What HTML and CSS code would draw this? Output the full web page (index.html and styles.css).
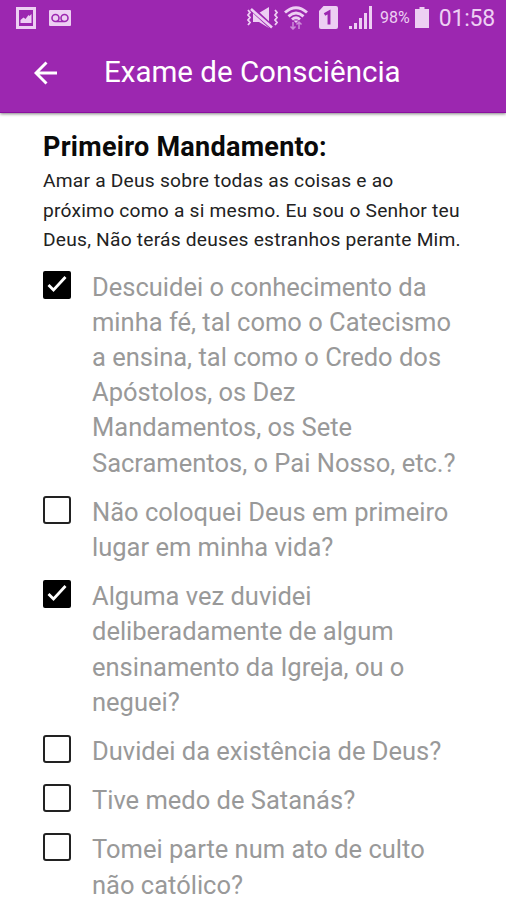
FILE: index.html
```html
<!DOCTYPE html>
<html lang="pt">
<head>
    <meta charset="UTF-8">
    <meta name="viewport" content="width=device-width, initial-scale=1.0">
    <title>Exame de Consciência</title>
    <link rel="stylesheet" href="styles.css">
</head>
<body>
    <header class="app-header">
        <!-- Status bar -->
        <div class="status-bar">
            <svg class="icon-picture" width="20" height="22" viewBox="0 0 20 22">
                <path fill="none" stroke="currentColor" stroke-width="3" d="M1.5 1.5h17v19h-17z"/>
                <path fill="currentColor" d="M4.500 16v-3l3-2.500 2 1.500 3-4 1 1 2-2v9z"/>
            </svg>
            <svg class="icon-voicemail" width="22" height="16" viewBox="0 0 22 16">
                <rect width="22" height="16" rx="1" fill="currentColor"/>
                <path fill="none" stroke="#9c27b0" stroke-width="1.600" d="M6.500 4.500a3.500 3.500 0 1 0 0 7a3.500 3.500 0 1 0 0-7M15.500 4.500a3.500 3.500 0 1 0 0 7a3.500 3.500 0 1 0 0-7M6.500 11.500h9"/>
            </svg>
            <div class="status-right">
                <svg class="icon-mute" width="34" height="22" viewBox="0 0 34 22">
                    <path fill="currentColor" d="M7 6h6l10-6v21l-10-6H7z"/>
                    <path stroke="#9c27b0" stroke-width="5" d="M5 1l20 18.500"/>
                    <path stroke="currentColor" stroke-width="2.600" d="M5 2l21 18.500"/>
                    <path fill="none" stroke="currentColor" stroke-width="1.800" d="M2 3l2 2.500-2 2.500 2 2.500-2 2.500 2 2.500-2 2.500M29 3l2 2.500-2 2.500 2 2.500-2 2.500 2 2.500-2 2.500"/>
                </svg>
                <svg class="icon-wifi" width="24" height="24" viewBox="0 0 24 24">
                    <path fill="none" stroke="currentColor" stroke-width="2.900" d="M1 6.500q11-9.500 22 0M4.500 10.300q7.500-6.500 15 0M8 13.500q4-3.500 8 0"/>
                    <path fill="currentColor" d="M9.500 14.500h5L12 17z"/>
                    <path fill="none" stroke="currentColor" stroke-width="1.500" opacity=".6" d="M9 16v7M6.500 20.500L9 23l2.500-2.500M15 23v-7M12.500 18.500L15 16l2.500 2.500"/>
                </svg>
                <svg class="icon-sim" width="19" height="23" viewBox="0 0 19 23">
                    <path fill="currentColor" d="M4.500 0H17a2 2 0 0 1 2 2v19a2 2 0 0 1-2 2H2a2 2 0 0 1-2-2V5z"/>
                    <path fill="none" stroke="#9c27b0" stroke-width="2.900" d="M5.500 8.500L10 6v12.500"/>
                </svg>
                <svg class="icon-signal" width="24" height="23" viewBox="0 0 24 23">
                    <path fill="currentColor" d="M0 20h3v3H0zM5 17h3v6H5zM10 12h3v11h-3zM15 7h3v16h-3zM20 0h3v23h-3z"/>
                </svg>
                <span class="battery-level">98%</span>
                <svg class="icon-battery" width="14" height="21" viewBox="0 0 14 21">
                    <path fill="currentColor" d="M4.500 0h5v2H14v19H0V2h4.500z"/>
                </svg>
                <span class="clock">01:58</span>
            </div>
        </div>

        <div class="toolbar">
            <svg class="back" width="24" height="24" viewBox="0 0 24 24">
                <path fill="none" stroke="currentColor" stroke-width="2.900" d="M23 12H3M12.500 1.500L2 12l10.500 10.500"/>
            </svg>
            <h1 class="title">Exame de Consciência</h1>
        </div>
    </header>

    <main class="content">
        <h2 class="heading">Primeiro Mandamento:</h2>
        <p class="intro">Amar a Deus sobre todas as coisas e ao<br>próximo como a si mesmo. Eu sou o Senhor teu<br>Deus, Não terás deuses estranhos perante Mim.</p>

        <ul class="questions">
            <li class="question">
                <span class="checkbox checked"><svg width="28" height="28" viewBox="0 0 28 28"><path d="M5.500 14l5 5L22.500 6"/></svg></span>
                <span class="label">Descuidei o conhecimento da<br>minha fé, tal como o Catecismo<br>a ensina, tal como o Credo dos<br>Apóstolos, os Dez<br>Mandamentos, os Sete<br>Sacramentos, o Pai Nosso, etc.?</span>
            </li>
            <li class="question">
                <span class="checkbox"></span>
                <span class="label">Não coloquei Deus em primeiro<br>lugar em minha vida?</span>
            </li>
            <li class="question">
                <span class="checkbox checked"><svg width="28" height="28" viewBox="0 0 28 28"><path d="M5.500 14l5 5L22.500 6"/></svg></span>
                <span class="label">Alguma vez duvidei<br>deliberadamente de algum<br>ensinamento da Igreja, ou o<br>neguei?</span>
            </li>
            <li class="question">
                <span class="checkbox"></span>
                <span class="label">Duvidei da existência de Deus?</span>
            </li>
            <li class="question">
                <span class="checkbox"></span>
                <span class="label">Tive medo de Satanás?</span>
            </li>
            <li class="question">
                <span class="checkbox"></span>
                <span class="label">Tomei parte num ato de culto<br>não católico?</span>
            </li>
        </ul>
    </main>
</body>
</html>
```
FILE: styles.css
```css
* {
    box-sizing: border-box;
    margin: 0;
    padding: 0;
}

body {
    font-family: Roboto, sans-serif;
    background-color: #fff;
    height: 900px;
    overflow: hidden;
}

svg {
    display: block;
    flex: none;
}

.app-header {
    height: 113px;
    background-color: #9c27b0;
    border-bottom: 1px solid #8a0f9f;
    box-shadow: 0 1px 3px rgba(0,0,0,0.5);
    color: #fff;
}

/* Status bar */
.status-bar {
    display: flex;
    height: 35px;
    padding: 0 11px 0 16px;
    align-items: center;
    color: #edcff3;
}

.icon-voicemail {
    margin-left: 13px;
}

.status-right {
    display: flex;
    align-items: center;
    margin-left: auto;
}

.icon-wifi {
    margin-left: 4px;
}

.icon-sim {
    margin-left: 11px;
}

.icon-signal {
    margin-left: 11px;
}

.battery-level {
    margin-left: 7px;
    font-size: 16px;
    white-space: nowrap;
}

.icon-battery {
    margin-left: 5px;
}

.clock {
    margin: 1px 0 0 10px;
    font-size: 23px;
    letter-spacing: -0.2px;
}

/* Toolbar */
.toolbar {
    display: flex;
    align-items: center;
    height: 76px;
    padding-left: 34px;
}

.title {
    margin: -2px 0 0 46px;
    font-size: 29.5px;
    font-weight: 400;
    line-height: 36px;
    white-space: nowrap;
}

/* Questions */
.content {
    padding: 18px 43px 0;
}

.heading {
    padding-top: 1px;
    font-size: 27px;
    font-weight: 700;
    letter-spacing: 0.27px;
    line-height: 31px;
    color: #0a0a0a;
    white-space: nowrap;
}

.intro {
    margin-top: 3px;
    font-size: 19.2px;
    letter-spacing: 0.22px;
    line-height: 29.5px;
    color: #222;
    white-space: nowrap;
}

.questions {
    margin-top: 15px;
    list-style: none;
}

.question {
    display: flex;
    margin-bottom: 14px;
}

.checkbox {
    flex: none;
    width: 28px;
    height: 28px;
    margin: 1px 21px 0 0;
    border: 2px solid #222;
    border-radius: 3px;
}

.checked {
    border: none;
    border-radius: 2px;
    background-color: #000;
}

.checked path {
    fill: none;
    stroke: #fff;
    stroke-width: 2.8;
}

.label {
    font-size: 25.5px;
    line-height: 35.2px;
    color: #999;
    white-space: nowrap;
}
```
